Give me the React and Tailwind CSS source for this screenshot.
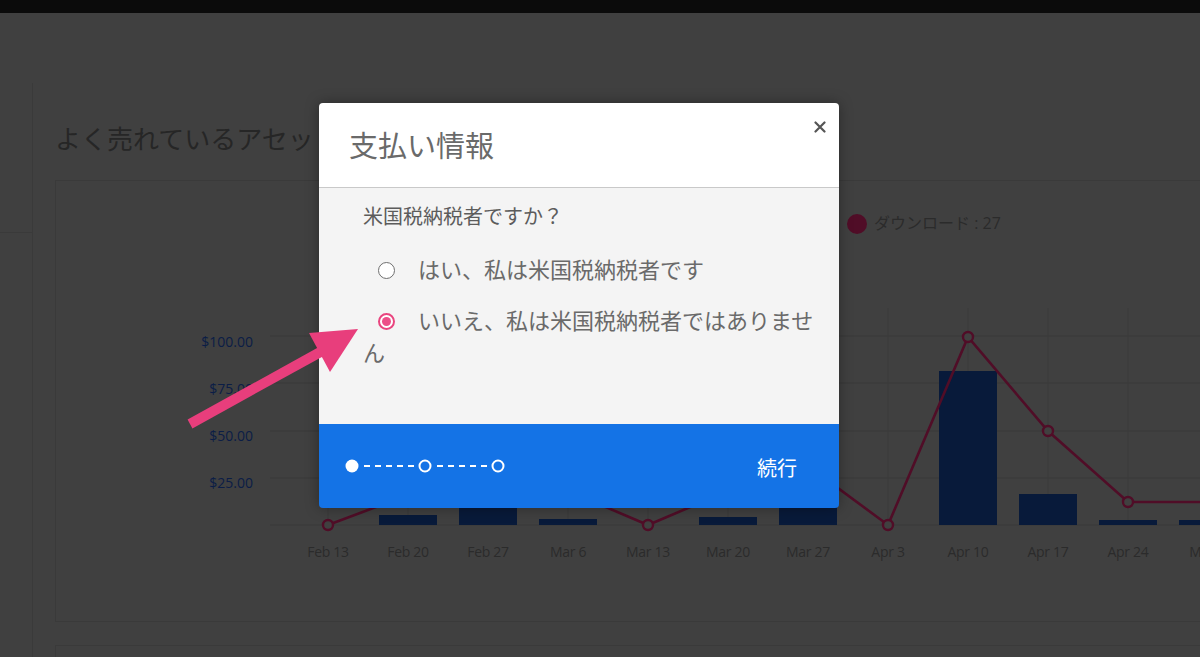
import React from "react";

const cats = ["Feb 13","Feb 20","Feb 27","Mar 6","Mar 13","Mar 20","Mar 27","Apr 3","Apr 10","Apr 17","Apr 24","May 1"];
const bars = [525, 515, 480, 519, 525, 517, 470, 525, 371, 494, 520, 520];
const line = [525, 495, 480, 491, 525, 491, 466, 525, 337, 431, 502, 502];
const xs = cats.map((_, i) => 328 + 80 * i);

function Chart() {
  return (
    <svg width="1158" height="440" viewBox="56 181 1158 440" className="block">
      {[336, 383, 431, 478, 525].map((y) => (
        <line key={y} x1="270" x2="1214" y1={y} y2={y} stroke="#393939" strokeWidth="1.2" />
      ))}
      {xs.map((x) => (
        <line key={x} x1={x} x2={x} y1="308" y2="525" stroke="#3a3a3a" strokeWidth="1" />
      ))}
      {[["$100.00", 342], ["$75.00", 389], ["$50.00", 436], ["$25.00", 483]].map(([t, y]) => (
        <text key={t} x="253" y={y + 5} textAnchor="end" fontSize="14" fill="#0b1d46" fontFamily="'Open Sans', sans-serif">{t}</text>
      ))}
      {bars.map((y, i) => y < 525 ? (
        <rect key={i} x={xs[i] - 29} y={y} width="58" height={525 - y} fill="#081a3a" />
      ) : null)}
      <polyline points={xs.map((x, i) => `${x},${line[i]}`).join(" ")} fill="none" stroke="#500d27" strokeWidth="2.6" />
      {xs.map((x, i) => (
        <circle key={i} cx={x} cy={line[i]} r="5" fill="#404040" stroke="#500d27" strokeWidth="2.4" />
      ))}
      {cats.map((c, i) => (
        <text key={c} x={xs[i]} y="557" textAnchor="middle" fontSize="14" fill="#2b2b2b" letterSpacing="-0.3" fontFamily="'Open Sans', sans-serif">{c}</text>
      ))}
      <circle cx="857" cy="224" r="10" fill="#500d27" />
      <text x="874" y="229" fontSize="16" fill="#2b2b2b" fontFamily="'Open Sans', 'Noto Sans CJK JP', sans-serif">ダウンロード : 27</text>
    </svg>
  );
}

function Radio({ checked }) {
  return checked ? (
    <span className="inline-flex items-center justify-center w-[17px] h-[17px] rounded-full border-2 border-[#e9457f] bg-white align-middle ml-[15px] mr-[23px] relative top-[-2px]">
      <span className="w-[9px] h-[9px] rounded-full bg-[#ec4f88]" />
    </span>
  ) : (
    <span className="inline-block w-[17px] h-[17px] rounded-full border-[1.5px] border-[#6f6f6f] bg-white align-middle ml-[15px] mr-[23px] relative top-[-2px]" />
  );
}

export default function App() {
  return (
    <div className="relative w-[1200px] h-[657px] overflow-hidden bg-[#404040] flex flex-col" style={{ fontFamily: "'Noto Sans CJK JP', 'Open Sans', sans-serif" }}>
      <div className="h-[13px] bg-[#0b0b0b] shrink-0" />
      <div className="flex flex-1">
        <div className="w-[33px] shrink-0 mt-[70px] border-r border-[#3a3a3a]">
          <div className="h-[150px] border-b border-[#3a3a3a]" />
        </div>
        <div className="pl-[22px] flex flex-col">
          <div className="mt-[109px] text-[26px] leading-[32px] text-[#262626] whitespace-nowrap">よく売れているアセット</div>
          <div className="mt-[26px] w-[1160px] h-[442px] border border-[#3a3a3a]">
            <Chart />
          </div>
          <div className="mt-[23px] w-[1160px] h-[40px] border-t border-l border-[#3a3a3a]" />
        </div>
      </div>

      <div className="absolute left-[319px] top-[103px] w-[520px] h-[405px] rounded-[4px] overflow-hidden flex flex-col shadow-[0_0_14px_rgba(0,0,0,0.35)]">
        <div className="h-[85px] bg-white border-b border-[#c9c9c9] relative flex items-center pl-[30px] shrink-0">
          <div className="text-[29px] leading-[36px] text-[#6a6a6a] mt-[-3px]">支払い情報</div>
          <svg className="absolute right-[13px] top-[18px]" width="12" height="12" viewBox="0 0 12 12">
            <path d="M1.5 1.5 L10.5 10.5 M10.5 1.5 L1.5 10.5" stroke="#555" strokeWidth="2.2" strokeLinecap="round" />
          </svg>
        </div>
        <div className="flex-1 bg-[#f4f4f4] pl-[44px] pr-[20px] pt-[15px]">
          <div className="text-[20px] leading-[26px] text-[#5c5c5c]">米国税納税者ですか？</div>
          <div className="mt-[23px] text-[22px] leading-[32px] text-[#6a6a6a]">
            <Radio checked={false} />はい、私は米国税納税者です
          </div>
          <div className="mt-[19px] text-[22px] leading-[32px] text-[#6a6a6a]">
            <Radio checked={true} />いいえ、私は米国税納税者ではありません
          </div>
        </div>
        <div className="h-[84px] bg-[#1473e6] flex items-center justify-between pl-[26px] pr-[42px] shrink-0">
          <svg width="160" height="16" viewBox="0 0 160 16" className="block">
            <circle cx="7" cy="8" r="6.5" fill="#fff" />
            <line x1="19" x2="69" y1="8" y2="8" stroke="#fff" strokeWidth="1.8" strokeDasharray="6 5" />
            <circle cx="80" cy="8" r="5.5" fill="none" stroke="#fff" strokeWidth="2" />
            <line x1="92" x2="142" y1="8" y2="8" stroke="#fff" strokeWidth="1.8" strokeDasharray="6 5" />
            <circle cx="153" cy="8" r="5.5" fill="none" stroke="#fff" strokeWidth="2" />
          </svg>
          <div className="text-[20px] leading-[28px] text-white mt-[4px]">続行</div>
        </div>
      </div>

      <svg className="absolute left-0 top-0 pointer-events-none" width="1200" height="657">
        <line x1="190" y1="424" x2="324" y2="350" stroke="#e83e7c" strokeWidth="10" />
        <polygon points="309,333 358,329 330,372" fill="#e83e7c" />
      </svg>
    </div>
  );
}
